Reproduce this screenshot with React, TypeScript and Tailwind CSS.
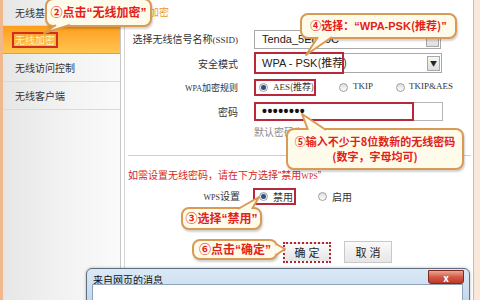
import type { ReactNode } from 'react'

const cjk = "font-['Noto_Sans_CJK_SC',sans-serif]"
const serif = "font-['Liberation_Serif','Noto_Sans_CJK_SC',serif]"
const latin = "font-['Liberation_Sans',sans-serif]"

function Tail({ points }: { points: string }) {
  return <svg className="pointer-events-none absolute left-0 top-0" width={480} height={300}>
    <polygon points={points} fill="#fffbea" />
    <polyline points={points} fill="none" stroke="#d99a55" strokeWidth={2} strokeLinejoin="round" />
  </svg>
}

function Callout({ className, tail, children }: { className: string; tail: string; children: ReactNode }) {
  return <>
    <div className={`absolute flex flex-col items-center justify-center whitespace-nowrap rounded-[8px] border-2 border-[#d99a55] bg-[#fffbea] font-bold text-[#e3211b] shadow-[1px_2px_2px_rgba(0,0,0,0.18)] ${className}`}>{children}</div>
    <Tail points={tail} />
  </>
}

// narrow quotes, as in the reference
const Q = ({ children }: { children: ReactNode }) => <><span className={latin}>“</span>{children}<span className={latin}>”</span></>

function Radio({ checked }: { checked?: boolean }) {
  return <span className="flex h-[9px] w-[9px] shrink-0 items-center justify-center rounded-full border border-[#a0a0a0] bg-gradient-to-b from-[#dcdcdc] to-white">
    {checked && <span className="h-[5px] w-[5px] rounded-full bg-[#2d4f86]" />}
  </span>
}

function Row({ label, h = 'h-[24px]', children }: { label: ReactNode; h?: string; children: ReactNode }) {
  return <div className={`flex items-center ${h}`}>
    <div className="w-[113px] whitespace-nowrap text-right">{label}</div>
    <div className="ml-[16px] flex items-center whitespace-nowrap">{children}</div>
  </div>
}

function ArrowBtn({ arrow = true }: { arrow?: boolean }) {
  return <span className="flex h-[15px] w-[13px] items-center justify-center border border-[#a8a8a8] bg-gradient-to-b from-[#f6f6f6] to-[#dedede] text-[7px] text-[#222]">{arrow ? '▼' : ''}</span>
}

export default function App() {
  return <div className={`relative flex h-[300px] w-[480px] overflow-hidden bg-white text-[10px] text-[#333] ${cjk}`}>
    <aside className="flex h-full w-[121px] flex-col border-l-[3px] border-r border-l-[#f0b88c] border-r-[#c8c8c8] bg-[linear-gradient(90deg,#e6e6e6,#f3f3f3_55%,#fafafa)]">
      <div className="flex h-[26px] items-center border-b border-[#dadada] pl-[12px]">无线基本设置</div>
      <div className="flex h-[28px] items-center border-b border-[#e0a040] bg-gradient-to-b from-[#ff9d17] to-[#ffc550] pl-[9px]">
        <span className="border-2 border-[#cf2f1e] px-[1px] leading-[12px] text-[#fff4b8]">无线加密</span>
      </div>
      <div className="flex h-[28px] items-center border-b border-[#dadada] pl-[12px]">无线访问控制</div>
      <div className="flex h-[28px] items-center border-b border-[#dadada] pl-[12px]">无线客户端</div>
    </aside>
    <div className="w-[4px] border-r border-[#d6d6d6] bg-white" />
    <main className="flex flex-1 flex-col border-r border-[#e6b48a]">
      <div className="flex h-[22px] items-center pl-[4px] text-[#e89a2c]">无线加密</div>
      <div className="h-[5px]" />
      <Row label={<>选择无线信号名称<span className={`${serif} text-[9px]`}>(SSID)</span></>}>
        <div className={`flex h-[19px] w-[187px] items-center justify-between border border-[#a9a9a9] pl-[7px] pr-[1px] text-[11px] text-[#222] ${latin}`}>
          <span>Tenda_5E8A9C</span><ArrowBtn arrow={false} />
        </div>
      </Row>
      <Row label="安全模式">
        <div className="relative flex h-[20px] w-[188px] items-center justify-between border border-[#a9a9a9] pl-[7px] pr-[1px] text-[11px] text-[#222]">
          <span><span className={latin}>WPA - PSK</span>(推荐)</span><ArrowBtn />
          <span className="absolute -left-[1px] -top-[2px] h-[22px] w-[90px] border-2 border-[#b8283a]" />
        </div>
      </Row>
      <Row label={<span className="text-[9px]"><span className={`${serif} text-[8px]`}>WPA</span>加密规则</span>}>
        <div className="flex h-[17px] w-[62px] items-center gap-[5px] border-2 border-[#b8283a] pl-[3px] text-[9px]">
          <Radio checked /><span><span className={serif}>AES</span>(推荐)</span>
        </div>
        <div className="ml-[23px] flex w-[57px] items-center gap-[5px]"><Radio /><span className={`${serif} text-[9px]`}>TKIP</span></div>
        <div className="flex items-center gap-[4px]"><Radio /><span className={`${serif} text-[9px]`}>TKIP&amp;AES</span></div>
      </Row>
      <Row label="密码">
        <div className={`relative flex h-[19px] w-[189px] items-center border border-[#b5b5b5] pl-[7px] text-[14px] font-bold tracking-[0.5px] text-[#111] ${latin}`}>
          ••••••••
          <span className="absolute -left-[1px] -top-[1px] h-[19px] w-[160px] border-2 border-[#b8283a]" />
        </div>
      </Row>
      <div className="flex h-[16px] items-center pl-[129px] text-[#8a8a8a]">默认密码为 (12345678)</div>
      <div className="mt-[16px] ml-[3px] mr-[2px] border-t border-[#cfcfcf]" />
      <div className="mt-[12px] whitespace-nowrap pl-[3px] leading-[14px] text-[#d42a22]">如需设置无线密码，请在下方选择<Q>禁用<span className={`${serif} text-[8px]`}>WPS</span></Q></div>
      <div className="mt-[3px] flex h-[18px] items-center whitespace-nowrap">
        <div className="w-[115px] text-right"><span className={`${serif} text-[8px]`}>WPS</span>设置</div>
        <div className="ml-[13px] flex h-[17px] w-[43px] items-center gap-[5px] border-2 border-[#b8283a] pl-[4px]"><Radio checked />禁用</div>
        <div className="ml-[22px] flex items-center gap-[5px]"><Radio />启用</div>
      </div>
      <div className="mt-[36px] flex h-[22px] items-center">
        <button className="ml-[158px] h-[21px] w-[48px] border-2 border-dotted border-[#b52630] bg-gradient-to-b from-[#fafafa] to-[#e4e4e4] pl-[3px] text-[11px] tracking-[3px] text-[#222]">确定</button>
        <button className="ml-[13px] h-[22px] w-[48px] border border-[#c9c9c9] bg-gradient-to-b from-[#fafafa] to-[#e6e6e6] pl-[3px] text-[11px] tracking-[3px] text-[#222]">取消</button>
      </div>
    </main>
    <div className="w-[6px] bg-[#f9e8da]" />

    <Callout className="left-[45px] top-[-2px] h-[29px] w-[107px] text-[12px]" tail="56,25 44,33 70,25"><span>②点击<Q>无线加密</Q></span></Callout>
    <Callout className="left-[300px] top-[13px] h-[26px] w-[157px] text-[11px]" tail="318,37 306,55 332,37"><span>④选择：<Q><span className={latin}>WPA-PSK</span>(推荐)</Q></span></Callout>
    <Callout className="left-[286px] top-[128px] h-[42px] w-[178px] text-[11px] leading-[15px]" tail="308,130 302,114 326,130">
      <span>⑤输入不少于8位数新的无线密码</span>
      <span>(数字，字母均可)</span>
    </Callout>
    <Callout className="left-[181px] top-[207px] h-[23px] w-[81px] text-[12px]" tail="238,209 259,197 252,209"><span>③选择<Q>禁用</Q></span></Callout>
    <Callout className="left-[192px] top-[239px] h-[21px] w-[86px] text-[12px]" tail="276,244 285,249 276,255"><span>⑥点击<Q>确定</Q></span></Callout>

    <div className="absolute left-[86px] top-[268px] h-[40px] w-[384px] rounded-t-[6px] border border-[#5f6e80] bg-gradient-to-b from-[#dbe9f6] to-[#bfd5ec] shadow-[0_0_3px_rgba(0,0,0,0.3)]">
      <div className="pl-[6px] pt-[3px] text-[10px] text-[#111]">来自网页的消息</div>
      <div className="absolute right-[5px] top-[1px] flex h-[14px] w-[36px] items-center justify-center rounded-b-[3px] border border-[#7c2a22] bg-gradient-to-b from-[#eaa797] via-[#d25a44] to-[#c0392a] text-[10px] font-bold text-white">x</div>
      <div className="absolute bottom-0 left-[5px] right-[6px] top-[15px] border border-[#8fa3b8] bg-white" />
    </div>
  </div>
}
